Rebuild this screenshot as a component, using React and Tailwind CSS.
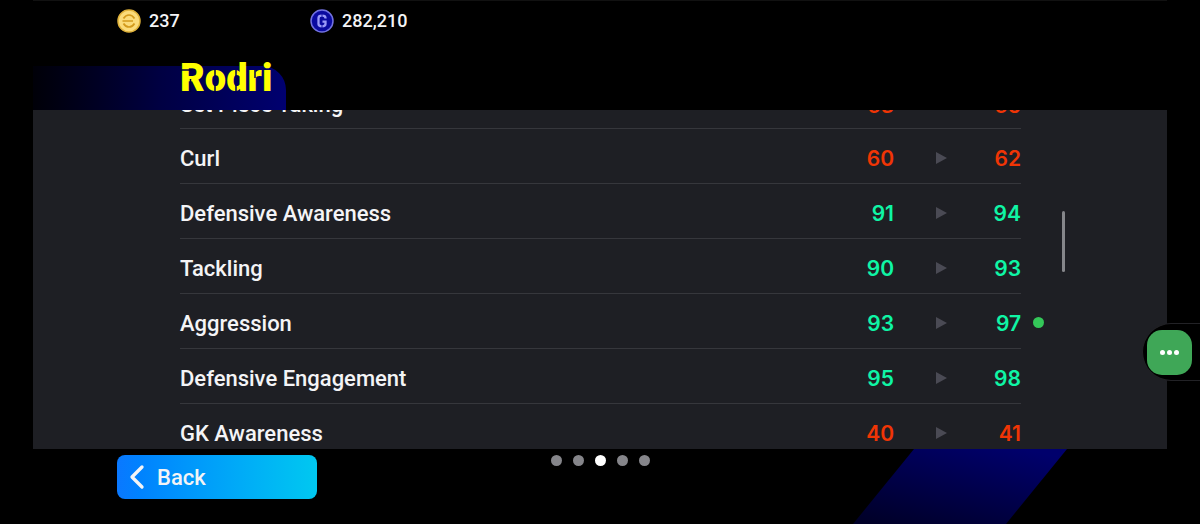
import React from "react";
import { ChevronLeft } from "lucide-react";

const stats = [
  { name: "Set Piece Taking", from: 63, to: 65 },
  { name: "Curl", from: 60, to: 62 },
  { name: "Defensive Awareness", from: 91, to: 94 },
  { name: "Tackling", from: 90, to: 93 },
  { name: "Aggression", from: 93, to: 97, marked: true },
  { name: "Defensive Engagement", from: 95, to: 98 },
  { name: "GK Awareness", from: 40, to: 41 },
];

const statColor = (value) => (value >= 90 ? "text-[#0ff5a5]" : "text-[#f03505]");

const CoinIcon = () => (
  <svg viewBox="0 0 24 24" className="size-6" fill="none" aria-hidden="true">
    <circle cx="12" cy="12" r="11" fill="#fbdc7a" stroke="#e0b23a" strokeWidth="1.5" />
    <path
      d="M6.500 9.500C8 7 10 6 12 6S16 7 17.500 9.500M5.500 12H16M6.500 14.500C8 17 10 18 12 18S16 17 17.500 14.500"
      stroke="#d39a1c"
      strokeWidth="1.700"
    />
  </svg>
);

const GpIcon = () => (
  <svg viewBox="0 0 24 24" className="size-6" fill="none" aria-hidden="true">
    <circle cx="12" cy="12" r="11" fill="#0a0aa0" stroke="#7272e0" strokeWidth="1.500" />
    <path
      d="M15.500 9.500V9c0-1.500-1-2.300-3.500-2.300S8.500 7.500 8.500 9v6c0 1.500 1 2.300 3.500 2.300s3.500-.8 3.500-2.300v-2.300h-3"
      stroke="#9a9af8"
      strokeWidth="2.300"
    />
    <path d="M12 5v4M12 15v4" stroke="#0a0aa0" strokeWidth="0.800" />
  </svg>
);

// thin gaps that give the player name its stencil look
const StencilCuts = () => (
  <svg
    viewBox="0 0 92 38"
    className="absolute inset-0 h-full w-[92px]"
    fill="none"
    strokeWidth="1.500"
    aria-hidden="true"
  >
    <path d="M0 11H12M10.500 20V33" stroke="#00003c" />
    <path d="M35 10V18M35 26V34" stroke="#00004a" />
    <path d="M56 11V18M56 26V34M75 11V19" stroke="#000058" />
  </svg>
);

const StatRow = ({ name, from, to, marked }) => (
  <tr className="h-[55px] border-b border-[#36373c] text-[22px] leading-none font-medium first:h-[51px]">
    <th scope="row" className="pt-1.5 text-left font-medium">
      {name}
    </th>
    <td className={`w-20 pt-1.5 text-right font-[Inter] text-[21px] font-semibold ${statColor(from)}`}>
      {from}
    </td>
    <td className="w-[95px] pt-1">
      <svg viewBox="0 0 11 12" className="mx-auto h-3 w-[11px]" aria-hidden="true">
        <path d="M0 0L11 6L0 12Z" fill="#4a4a54" />
      </svg>
    </td>
    <td
      className={`relative w-8 pt-1.5 text-right font-[Inter] text-[21px] font-semibold ${statColor(to)}`}
    >
      {to}
      {marked && (
        <span className="absolute left-full top-1/2 ml-3 -mt-1 size-[11px] rounded-full bg-[#34c759]" />
      )}
    </td>
  </tr>
);

const App = () => {
  return (
    <div className="relative flex h-screen flex-col overflow-hidden bg-black font-[Roboto,sans-serif] text-[#f4f4f6]">
      <header className="flex h-[110px] shrink-0 flex-col justify-between px-[33px]">
        <div className="flex border-t border-[#111] pl-[84px] pt-1.5 text-lg font-medium">
          <div className="flex w-[193px] items-center gap-2">
            <CoinIcon />
            237
          </div>
          <div className="flex items-center gap-2">
            <GpIcon />
            282,210
          </div>
        </div>
        <div className="flex h-11 w-[253px] items-center rounded-tr-[24px] bg-linear-to-r from-[#000008] via-[#000042] to-[#000070] pl-[147px]">
          <h1 className="relative -mt-5 text-[38px] leading-none font-black text-[#ffff00]">
            Rodri
            <StencilCuts />
          </h1>
        </div>
      </header>

      <main className="relative mx-[33px] min-h-0 flex-1 overflow-hidden bg-[#1e1f24] pl-[147px] pr-[146px]">
        <table className="-mt-[33px] w-full border-collapse">
          <tbody>
            {stats.map((stat) => (
              <StatRow key={stat.name} {...stat} />
            ))}
          </tbody>
        </table>
        <div className="absolute right-[102px] top-[101px] h-[61px] w-[3px] rounded-full bg-[#85868a]" />
      </main>

      <footer className="relative flex h-[75px] shrink-0 items-start justify-center pt-1.5">
        <svg
          viewBox="0 0 214 75"
          preserveAspectRatio="none"
          className="absolute right-[133px] top-0 h-full w-[214px]"
          aria-hidden="true"
        >
          <defs>
            <linearGradient id="beam" x1="0.1" y1="1" x2="0.8" y2="0">
              <stop offset="0" stopColor="#000028" />
              <stop offset="1" stopColor="#00006c" />
            </linearGradient>
          </defs>
          <path d="M61 0H214L153 75H0Z" fill="url(#beam)" />
        </svg>
        <button className="absolute left-[117px] flex h-11 w-[200px] items-center rounded-lg bg-linear-to-r from-[#0a78ff] to-[#00c8f0] text-[22px] font-medium">
          <ChevronLeft className="size-10" strokeWidth={2} />
          Back
        </button>
        <nav className="flex gap-[11px]" aria-label="Pages">
          {[0, 1, 2, 3, 4].map((page) => (
            <span
              key={page}
              className={`size-[11px] rounded-full ${page === 2 ? "bg-white" : "bg-[#85858a]"}`}
            />
          ))}
        </nav>
      </footer>

      <div className="absolute right-0 top-[323px] flex h-[58px] w-[58px] items-center rounded-l-full border border-r-0 border-[#222226] bg-black pl-1">
        <button
          aria-label="More"
          className="flex size-[45px] items-center justify-center gap-0.5 rounded-[15px] bg-[#3fa757]"
        >
          <span className="size-[5px] rounded-full bg-white" />
          <span className="size-[5px] rounded-full bg-white" />
          <span className="size-[5px] rounded-full bg-white" />
        </button>
      </div>
    </div>
  );
};

export default App;
